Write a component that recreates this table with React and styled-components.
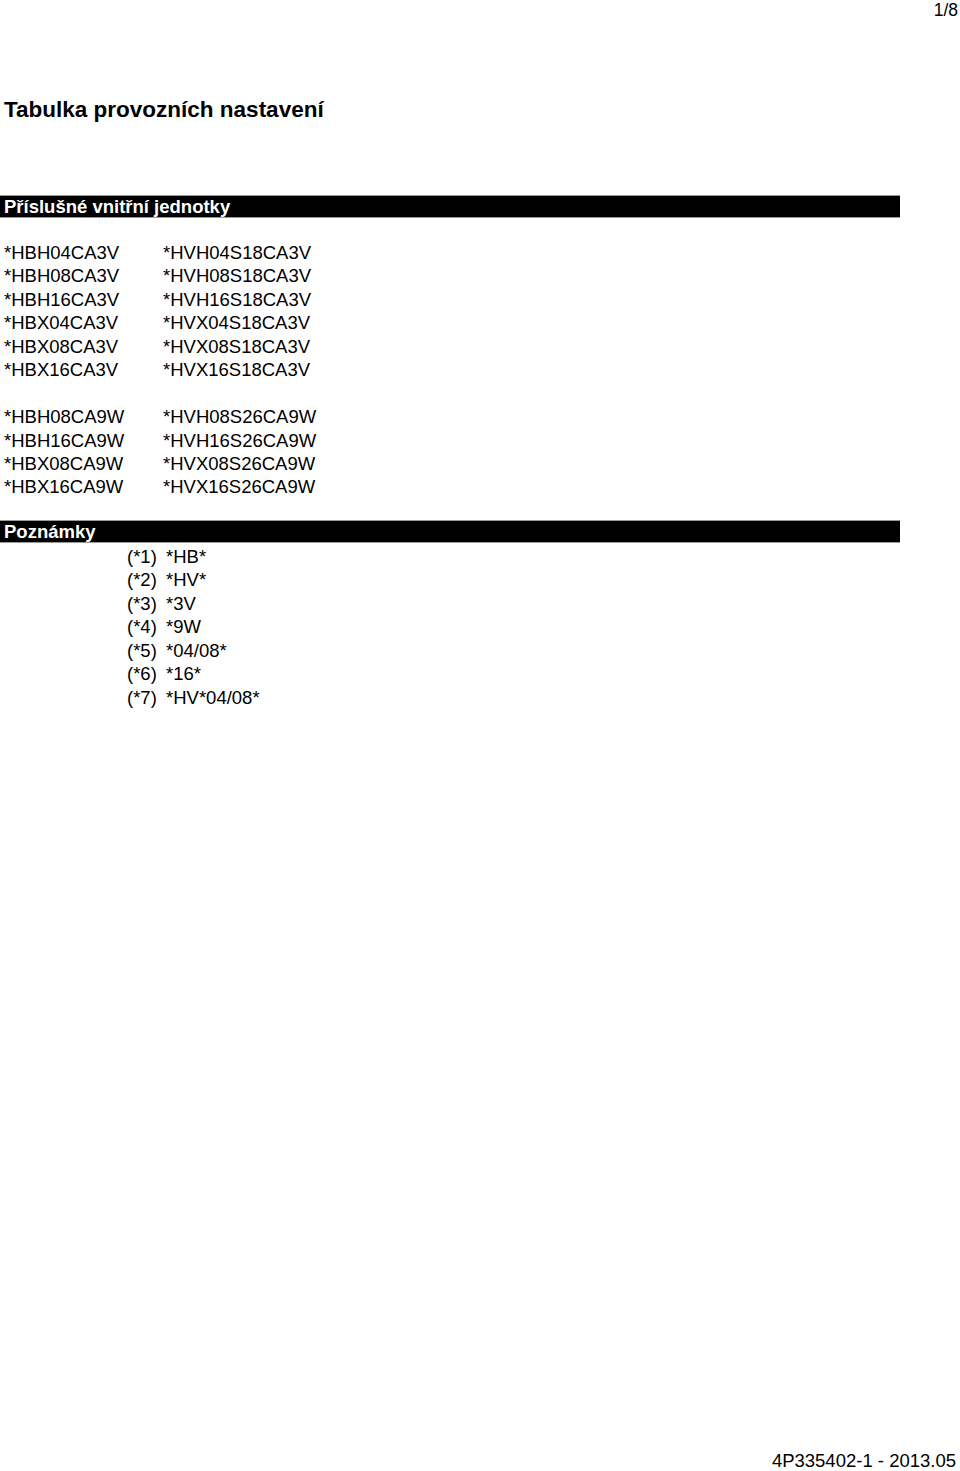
import React from 'react';
import styled, { createGlobalStyle } from 'styled-components';

const GlobalStyle = createGlobalStyle`
  body {
    margin: 0;
    background: #ffffff;
    color: #000000;
    font-family: "Liberation Sans", Arial, sans-serif;
  }
`;

const UNITS_3V = [
  ['*HBH04CA3V', '*HVH04S18CA3V'],
  ['*HBH08CA3V', '*HVH08S18CA3V'],
  ['*HBH16CA3V', '*HVH16S18CA3V'],
  ['*HBX04CA3V', '*HVX04S18CA3V'],
  ['*HBX08CA3V', '*HVX08S18CA3V'],
  ['*HBX16CA3V', '*HVX16S18CA3V'],
];

const UNITS_9W = [
  ['*HBH08CA9W', '*HVH08S26CA9W'],
  ['*HBH16CA9W', '*HVH16S26CA9W'],
  ['*HBX08CA9W', '*HVX08S26CA9W'],
  ['*HBX16CA9W', '*HVX16S26CA9W'],
];

const NOTES = [
  ['(*1)', '*HB*'],
  ['(*2)', '*HV*'],
  ['(*3)', '*3V'],
  ['(*4)', '*9W'],
  ['(*5)', '*04/08*'],
  ['(*6)', '*16*'],
  ['(*7)', '*HV*04/08*'],
];

const App = () => {
  return (
    <>
      <GlobalStyle />
      <Page>
        <PageNumber>1/8</PageNumber>
        <Title>Tabulka provozních nastavení</Title>

        <SectionBar>Příslušné vnitřní jednotky</SectionBar>
        <UnitGroup $top={23}>
          {UNITS_3V.map(([hb, hv]) => (
            <React.Fragment key={hb}>
              <Cell>{hb}</Cell>
              <Cell>{hv}</Cell>
            </React.Fragment>
          ))}
        </UnitGroup>
        <UnitGroup $top={23.4}>
          {UNITS_9W.map(([hb, hv]) => (
            <React.Fragment key={hb}>
              <Cell>{hb}</Cell>
              <Cell>{hv}</Cell>
            </React.Fragment>
          ))}
        </UnitGroup>

        <SectionBar $top={21}>Poznámky</SectionBar>
        <NoteList>
          {NOTES.map(([mark, text]) => (
            <React.Fragment key={mark}>
              <Cell>{mark}</Cell>
              <Cell>{text}</Cell>
            </React.Fragment>
          ))}
        </NoteList>

        <Footer>4P335402-1 - 2013.05</Footer>
      </Page>
    </>
  );
};

export default App;

const Page = styled.div`
  width: 960px;
  min-height: 1471px;
  display: flex;
  flex-direction: column;
  font-size: 18.5px;
`;

const PageNumber = styled.div`
  text-align: right;
  padding-right: 2px;
  font-size: 17.5px;
  line-height: 20px;
`;

const Title = styled.h1`
  margin: 77px 0 0 0;
  padding-left: 4px;
  font-size: 22.5px;
  line-height: 26px;
  font-weight: 700;
`;

const SectionBar = styled.div`
  margin-top: ${({ $top }) => ($top != null ? $top : 72)}px;
  width: 900px;
  height: 23px;
  box-sizing: border-box;
  background: #000000;
  border-top: 1px solid #9a9a9a;
  border-bottom: 1px solid #9a9a9a;
  color: #ffffff;
  font-weight: 700;
  font-size: 18.5px;
  line-height: 21px;
  padding-left: 4px;
`;

const UnitGroup = styled.div`
  margin-top: ${({ $top }) => $top}px;
  display: grid;
  grid-template-columns: 159px auto;
  padding-left: 4px;
  justify-content: start;
`;

const Cell = styled.div`
  line-height: 23.45px;
  white-space: nowrap;
`;

const NoteList = styled.div`
  margin-top: 2px;
  display: grid;
  grid-template-columns: 39px auto;
  padding-left: 127px;
  justify-content: start;
`;

const Footer = styled.div`
  margin-top: auto;
  text-align: right;
  padding-right: 4px;
  line-height: 20px;
`;
